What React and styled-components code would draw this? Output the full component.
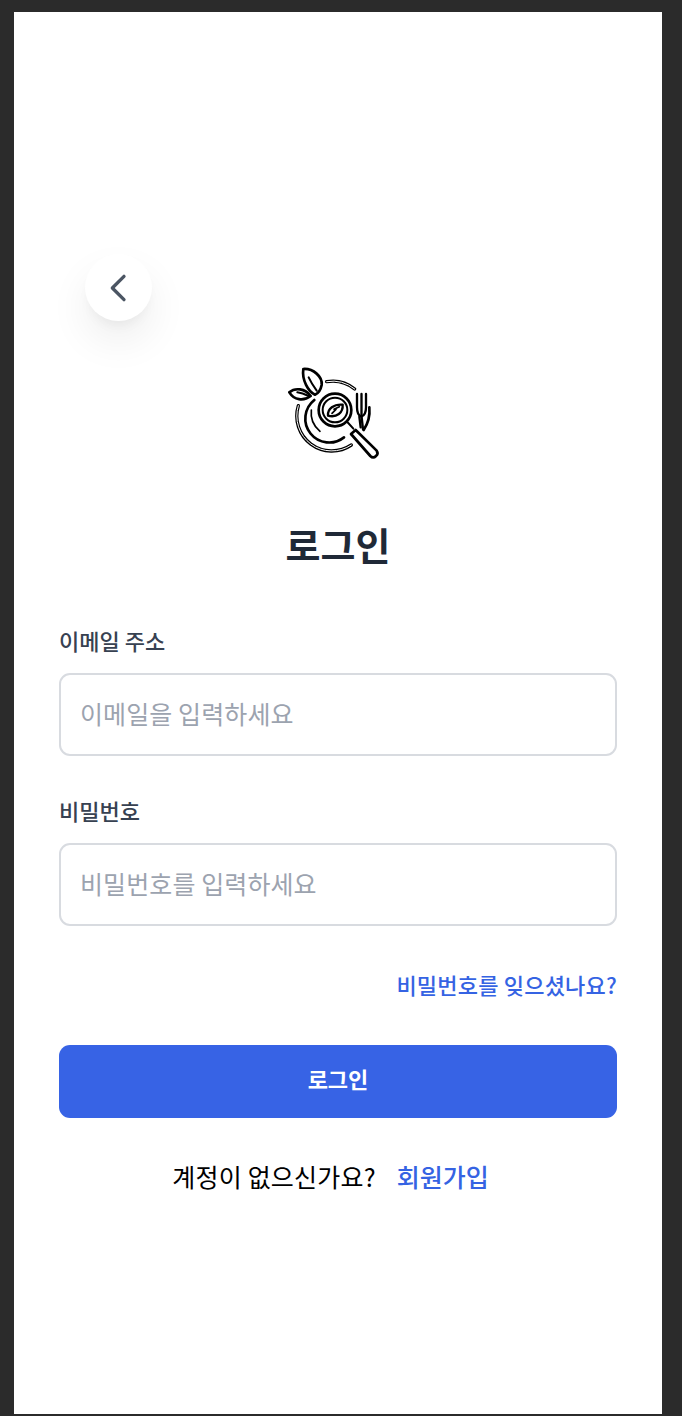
import React from "react"
import styled, { createGlobalStyle } from "styled-components"

const FONT = `"Noto Sans CJK KR", "Noto Sans", sans-serif`

const GlobalStyle = createGlobalStyle`
  html, body {
    margin: 0;
    padding: 0;
    background: #2b2b2b;
  }
  * {
    box-sizing: border-box;
  }
`

function Logo() {
  return (
    <LogoSvg viewBox="54 48 300 300" fill="none" stroke="#000" strokeLinecap="round" strokeLinejoin="round">
      {/* leaves */}
      <path strokeWidth="8" d="M100 57C130 55 158 80 155 105C152 120 145 130 135 134C115 125 95 90 100 57Z" />
      <path strokeWidth="6" d="M116 82C122 95 130 108 140 122" />
      <path strokeWidth="8" d="M58 127C75 112 105 115 122 138C100 155 72 150 58 127Z" />
      <path strokeWidth="6" d="M82 127C95 129 105 133 116 138" />
      {/* plate */}
      <path strokeWidth="10" d="M170 95A105 105 0 0 1 254 117" />
      <path strokeWidth="3" stroke="#fff" d="M170 95A105 105 0 0 1 254 117" />
      <path strokeWidth="10" d="M85 167A105 105 0 0 0 244 285" />
      <path strokeWidth="3" stroke="#fff" d="M85 167A105 105 0 0 0 244 285" />
      <path strokeWidth="8" d="M298 172A105 105 0 0 1 281 240" />
      <path strokeWidth="8" d="M133 150A70 70 0 0 0 222 262" />
      <path strokeWidth="5" d="M124 180A72 72 0 0 0 150 244" />
      {/* magnifier */}
      <circle cx="195" cy="180" r="49" strokeWidth="8" />
      <circle cx="195" cy="180" r="37" strokeWidth="6" />
      <path strokeWidth="7" d="M174 197C172 176 192 162 218 164C220 188 200 204 174 197Z" />
      <path strokeWidth="5" d="M186 190L198 178H192L208 170" />
      <path strokeWidth="6" d="M232 216L250 236" />
      <path strokeWidth="8" d="M243 252L257 240L320 302C324 308 323 314 318 318C313 323 306 323 301 318Z" />
      {/* fork */}
      <path strokeWidth="7" d="M261 132V172C261 190 268 198 274 200C281 198 288 190 288 172V132" />
      <path strokeWidth="7" d="M274.500 132V198L279 238" />
      <path strokeWidth="7" d="M268 200L272 232" />
    </LogoSvg>
  )
}

export default function App() {
  return (
    <Page>
      <GlobalStyle />
      <Frame>
        <BackButton aria-label="뒤로 가기">
          <svg width="40" height="40" viewBox="0 0 24 24" fill="none" stroke="#4b5563" strokeWidth="2" strokeLinecap="round" strokeLinejoin="round">
            <path d="M15 5l-7 7 7 7" />
          </svg>
        </BackButton>
        <LogoRow>
          <Logo />
        </LogoRow>
        <Title>로그인</Title>
        <Form onSubmit={e => e.preventDefault()}>
          <Field>
            <Label>이메일 주소</Label>
            <Input type="email" placeholder="이메일을 입력하세요" />
          </Field>
          <Field>
            <Label>비밀번호</Label>
            <Input type="password" placeholder="비밀번호를 입력하세요" />
          </Field>
          <ForgotRow>
            <TextLink href="#">비밀번호를 잊으셨나요?</TextLink>
          </ForgotRow>
          <Submit type="submit">로그인</Submit>
        </Form>
        <Footer>
          <span>계정이 없으신가요?</span>
          <SignUp href="#">회원가입</SignUp>
        </Footer>
      </Frame>
    </Page>
  )
}

const Page = styled.div`
  width: 682px;
  height: 1416px;
  padding: 12px 20px 2px 14px;
  background: #2b2b2b;
  font-family: ${FONT};
`

const Frame = styled.main`
  height: 1402px;
  background: #fff;
  padding: 242px 45px 0;
`

const BackButton = styled.button`
  width: 67px;
  height: 67px;
  margin-left: 26px;
  padding: 0;
  border: none;
  border-radius: 50%;
  background: #fff;
  display: flex;
  align-items: center;
  justify-content: center;
  box-shadow: 0 20px 40px 0 rgba(0, 0, 0, 0.07), 0 8px 12px -4px rgba(0, 0, 0, 0.05);
`

const LogoRow = styled.div`
  display: flex;
  justify-content: center;
  margin-top: 45px;
`

const LogoSvg = styled.svg`
  width: 100px;
  height: 100px;
`

const Title = styled.h1`
  margin: 50px 0 0;
  font-size: 38px;
  line-height: 56px;
  font-weight: 700;
  color: #1f2937;
  text-align: center;
`

const Form = styled.form`
  margin-top: 52px;
  display: flex;
  flex-direction: column;
`

const Field = styled.label`
  display: block;
  margin-bottom: 38px;
`

const Label = styled.div`
  font-size: 22px;
  line-height: 32px;
  font-weight: 500;
  color: #374151;
  margin-bottom: 17px;
`

const Input = styled.input`
  display: block;
  width: 100%;
  height: 83px;
  padding: 0 19px 4px;
  border: 2px solid #d8dbe0;
  border-radius: 11px;
  background: #fff;
  font-family: inherit;
  font-size: 25px;
  letter-spacing: 0.1px;
  outline: none;

  &::placeholder {
    color: #9ca3af;
    opacity: 1;
  }
`

const ForgotRow = styled.div`
  display: flex;
  justify-content: flex-end;
  margin-top: 4px;
`

const TextLink = styled.a`
  font-size: 22px;
  line-height: 32px;
  font-weight: 500;
  letter-spacing: 0.2px;
  color: #3563e3;
  text-decoration: none;
`

const Submit = styled.button`
  height: 73px;
  margin-top: 45px;
  padding: 0 0 7px;
  border: none;
  border-radius: 11px;
  background: #3763e5;
  color: #fff;
  font-family: inherit;
  font-size: 22px;
  font-weight: 600;
`

const Footer = styled.div`
  margin-top: 40px;
  padding-right: 15px;
  display: flex;
  justify-content: center;
  gap: 21px;
  font-size: 25px;
  line-height: 36px;
  letter-spacing: 0.2px;
  color: #000;
`

const SignUp = styled.a`
  font-weight: 500;
  letter-spacing: 0;
  color: #3563e3;
  text-decoration: none;
`
